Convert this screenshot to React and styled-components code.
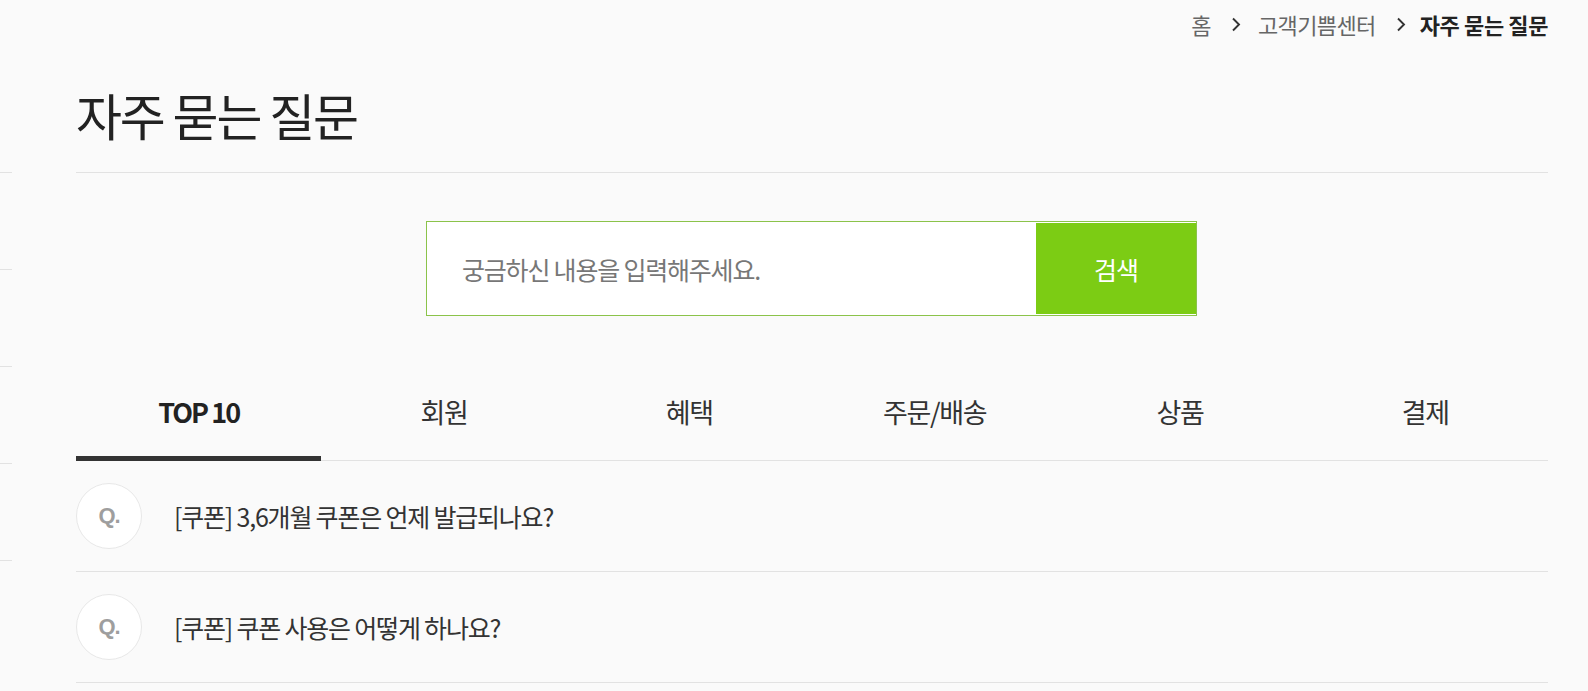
import React, { useState } from 'react';
import styled, { createGlobalStyle, css } from 'styled-components';

const GlobalStyle = createGlobalStyle`
  html, body {
    margin: 0;
    padding: 0;
    background: #fafafa;
  }
  body {
    font-family: "Noto Sans CJK KR", "Noto Sans", sans-serif;
    color: #333;
  }
  * {
    box-sizing: border-box;
  }
`;

const Page = styled.div`
  display: flex;
  min-height: 691px;
  overflow: hidden;
`;

const Rail = styled.div`
  width: 12px;
  flex-shrink: 0;
  padding-top: 172px;
  display: flex;
  flex-direction: column;
  gap: 96px;
`;

const Tick = styled.div`
  height: 1px;
  background: #e2e2e2;
`;

const Main = styled.main`
  flex: 1;
  padding: 0 40px 0 64px;
`;

const Breadcrumb = styled.nav`
  height: 48px;
  display: flex;
  justify-content: flex-end;
  align-items: center;
  font-size: 22px;
  letter-spacing: -0.6px;
  color: #666;
`;

const Crumb = styled.span`
  ${({ current }) =>
    current &&
    css`
      color: #222;
      font-weight: 700;
      letter-spacing: -0.4px;
    `}
`;

const Chevron = styled.svg`
  width: 12px;
  height: 15px;
  margin: 0 ${({ last }) => (last ? 13 : 16)}px 0 19px;
`;

const Title = styled.h1`
  margin: 0;
  padding: 36px 0 28px;
  font-size: 50px;
  line-height: 60px;
  font-weight: 400;
  letter-spacing: -2.2px;
  color: #222;
  border-bottom: 1px solid #e2e2e2;
`;

const SearchWrap = styled.div`
  display: flex;
  justify-content: center;
  padding: 48px 0 0;
`;

const SearchBox = styled.form`
  width: 771px;
  height: 95px;
  display: flex;
  align-items: stretch;
  border: 1px solid #8bc34a;
  background: #fff;
  padding: 1px 0;
  margin-left: -1px;
`;

const SearchInput = styled.input`
  flex: 1;
  border: none;
  outline: none;
  background: transparent;
  padding: 0 0 0 35px;
  font-family: inherit;
  font-size: 25px;
  letter-spacing: -1.2px;
  color: #333;
  &::placeholder {
    color: #777;
  }
`;

const SearchBtn = styled.button`
  width: 160px;
  border: none;
  background: #7ccc14;
  color: #fff;
  font-family: inherit;
  font-size: 25px;
  letter-spacing: -1px;
  cursor: pointer;
`;

const Tabs = styled.ul`
  list-style: none;
  margin: 54px 0 0;
  padding: 0;
  display: grid;
  grid-template-columns: repeat(6, 1fr);
  border-bottom: 1px solid #e2e2e2;
`;

const Tab = styled.li`
  height: 91px;
  display: flex;
  align-items: center;
  justify-content: center;
  padding-bottom: 4px;
  font-size: 27px;
  letter-spacing: -1.3px;
  color: #333;
  cursor: pointer;
  margin-bottom: -1px;
  border-bottom: 5px solid transparent;
  ${({ active }) =>
    active &&
    css`
      font-weight: 700;
      color: #222;
      letter-spacing: -2px;
      border-bottom-color: #333;
    `}
`;

const List = styled.ul`
  list-style: none;
  margin: 0;
  padding: 0;
`;

const Row = styled.li`
  height: 111px;
  display: flex;
  align-items: center;
  gap: 32px;
  border-bottom: 1px solid #e2e2e2;
`;

const QBadge = styled.span`
  width: 66px;
  height: 66px;
  border-radius: 50%;
  border: 1px solid #e8e8e8;
  background: #fff;
  display: flex;
  align-items: center;
  justify-content: center;
  font-family: "Liberation Sans", "Noto Sans", sans-serif;
  font-weight: 700;
  font-size: 22px;
  letter-spacing: -1px;
  color: #9e9e9e;
  flex-shrink: 0;
`;

const Question = styled.span`
  font-size: 25px;
  letter-spacing: -1.2px;
  color: #333;
`;

const tabs = ['TOP 10', '회원', '혜택', '주문/배송', '상품', '결제'];
const questions = [
  '[쿠폰] 3,6개월 쿠폰은 언제 발급되나요?',
  '[쿠폰] 쿠폰 사용은 어떻게 하나요?',
];

const Arrow = ({ last }) => (
  <Chevron viewBox="0 0 12 15" fill="none" last={last}>
    <path d="M3 1.5 L9 7.5 L3 13.5" stroke="#333" strokeWidth="1.9" />
  </Chevron>
);

const App = () => {
  const [active, setActive] = useState(0);

  return (
    <>
      <GlobalStyle />
      <Page>
        <Rail>
          {[0, 1, 2, 3, 4].map((i) => (
            <Tick key={i} />
          ))}
        </Rail>
        <Main>
          <Breadcrumb>
            <Crumb>홈</Crumb>
            <Arrow />
            <Crumb>고객기쁨센터</Crumb>
            <Arrow last />
            <Crumb current>자주 묻는 질문</Crumb>
          </Breadcrumb>
          <Title>자주 묻는 질문</Title>
          <SearchWrap>
            <SearchBox onSubmit={(e) => e.preventDefault()}>
              <SearchInput placeholder="궁금하신 내용을 입력해주세요." />
              <SearchBtn type="submit">검색</SearchBtn>
            </SearchBox>
          </SearchWrap>
          <Tabs>
            {tabs.map((t, i) => (
              <Tab key={t} active={i === active} onClick={() => setActive(i)}>
                {t}
              </Tab>
            ))}
          </Tabs>
          <List>
            {questions.map((q) => (
              <Row key={q}>
                <QBadge>Q.</QBadge>
                <Question>{q}</Question>
              </Row>
            ))}
          </List>
        </Main>
      </Page>
    </>
  );
};

export default App;
